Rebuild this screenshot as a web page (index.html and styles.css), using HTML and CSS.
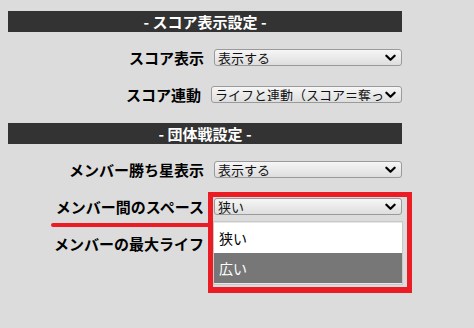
FILE: index.html
```html
<!DOCTYPE html>
<html lang="ja">
<head>
    <meta charset="UTF-8">
    <meta name="viewport" content="width=device-width, initial-scale=1.0">
    <link rel="stylesheet" href="styles.css">
    <title>設定</title>
</head>
<body>
    <div class="panel">
        <div class="header">- スコア表示設定 -</div>
        <div class="row">
            <div class="label">スコア表示</div>
            <div class="select"><span class="value">表示する</span><svg class="chevron" viewBox="0 0 12 8"><path d="M1.5 1.5 L6 6 L10.5 1.5"/></svg></div>
        </div>
        <div class="row">
            <div class="label">スコア連動</div>
            <div class="select"><span class="value clip">ライフと連動（スコア＝奪っ</span><svg class="chevron" viewBox="0 0 12 8"><path d="M1.5 1.5 L6 6 L10.5 1.5"/></svg></div>
        </div>

        <div class="header gap">- 団体戦設定 -</div>
        <div class="row">
            <div class="label">メンバー勝ち星表示</div>
            <div class="select"><span class="value">表示する</span><svg class="chevron" viewBox="0 0 12 8"><path d="M1.5 1.5 L6 6 L10.5 1.5"/></svg></div>
        </div>
        <div class="row">
            <div class="label">メンバー間のスペース</div>
            <div class="select"><span class="value">狭い</span><svg class="chevron" viewBox="0 0 12 8"><path d="M1.5 1.5 L6 6 L10.5 1.5"/></svg></div>
        </div>
        <div class="row">
            <div class="label">メンバーの最大ライフ</div>
            <!-- covered by the open list -->
            <div class="select"></div>
        </div>
    </div>

    <!-- open dropdown list -->
    <div class="options">
        <div class="option">狭い</div>
        <div class="option selected">広い</div>
    </div>

    <!-- annotation -->
    <div class="mark-box"></div>
    <div class="mark-line"></div>
</body>
</html>
```

FILE: styles.css
```css
body{
    margin: 0;
    padding: 11px 8px 0;
    background-color: #dcdcdc;
    font-family: "Noto Sans CJK JP", "Noto Sans", sans-serif;
    color: #000;
}

.panel{
    width: 394px;
}

.header{
    height: 21px;
    line-height: 21px;
    background-color: #333333;
    color: #fff;
    font-size: 15px;
    font-weight: bold;
    text-align: center;
}

.header.gap{
    margin-top: 20px;
}

.row{
    display: flex;
    align-items: center;
    height: 17px;
    margin-top: 20px;
}

.header + .row{
    margin-top: 17px;
}

.label{
    width: 196px;
    margin-right: 10px;
    text-align: right;
    font-size: 15px;
    font-weight: bold;
    white-space: nowrap;
    line-height: 17px;
}

.select{
    flex: 1;
    height: 17px;
    box-sizing: border-box;
    border: 1px solid #9a9a9a;
    border-radius: 3px;
    background: linear-gradient(#f6f6f6, #dedede);
    display: flex;
    align-items: center;
    padding-left: 3px;
}

.value{
    flex: 1;
    font-size: 13px;
    line-height: 13px;
    white-space: nowrap;
    color: #111;
}

/* long option text is cut by the arrow */
.value.clip{
    overflow: hidden;
}

.chevron{
    width: 11px;
    height: 8px;
    margin: 0 5px 0 1px;
    flex: none;
}

.chevron path{
    fill: none;
    stroke: #000;
    stroke-width: 2.4;
    stroke-linecap: round;
    stroke-linejoin: round;
}

.options{
    position: absolute;
    left: 213px;
    top: 221px;
    width: 188px;
    border: 1px solid #c8c8c8;
    padding: 1px 0;
    background-color: #e6e6e6;
}

.option{
    height: 30px;
    line-height: 30px;
    padding-left: 5px;
    font-size: 14px;
    background-color: #fff;
}

.option.selected{
    background-color: #777777;
    color: #fff;
}

.mark-box{
    position: absolute;
    left: 208px;
    top: 192px;
    width: 194px;
    height: 90px;
    border: 5px solid #ec1c24;
    border-bottom-width: 6px;
}

.mark-line{
    position: absolute;
    left: 51px;
    top: 223px;
    width: 160px;
    height: 4px;
    border-radius: 2px;
    background-color: #ec1c24;
}
```
